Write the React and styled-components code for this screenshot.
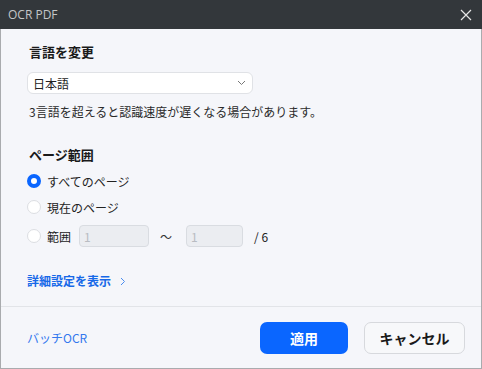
import React, { useState } from "react";
import styled, { createGlobalStyle } from "styled-components";

const GlobalStyle = createGlobalStyle`
  html, body {
    margin: 0;
    padding: 0;
    background: #f5f6fa;
  }
  * {
    box-sizing: border-box;
  }
`;

const FONT = `"Noto Sans CJK JP", "Noto Sans", sans-serif`;

const App = () => {
  const [range, setRange] = useState("all");
  return (
    <>
      <GlobalStyle />
      <Window>
        <TitleBar>
          <Title>OCR PDF</Title>
          <CloseButton aria-label="close">
            <svg width="12" height="12" viewBox="0 0 12 12">
              <path d="M1 1 L11 11 M11 1 L1 11" stroke="#e6e6e6" strokeWidth="1.2" fill="none" />
            </svg>
          </CloseButton>
        </TitleBar>

        <Body>
          <SectionHeader>言語を変更</SectionHeader>
          <Select>
            <span>日本語</span>
            <svg width="9" height="6" viewBox="0 0 9 6">
              <path d="M1 1 L4.5 4.5 L8 1" stroke="#777" strokeWidth="1" fill="none" />
            </svg>
          </Select>
          <Note>3言語を超えると認識速度が遅くなる場合があります。</Note>

          <SectionHeader top={25}>ページ範囲</SectionHeader>
          <RadioList>
            <RadioRow onClick={() => setRange("all")}>
              <Radio checked={range === "all"} />
              <RadioLabel>すべてのページ</RadioLabel>
            </RadioRow>
            <RadioRow onClick={() => setRange("current")}>
              <Radio checked={range === "current"} />
              <RadioLabel>現在のページ</RadioLabel>
            </RadioRow>
            <RadioRow top={7} onClick={() => setRange("range")}>
              <Radio checked={range === "range"} />
              <RadioLabel>範囲</RadioLabel>
              <PageInput width={70} defaultValue="1" disabled />
              <Tilde>～</Tilde>
              <PageInput width={57} defaultValue="1" disabled />
              <Total>/ 6</Total>
            </RadioRow>
          </RadioList>

          <MoreLink>
            詳細設定を表示
            <svg width="6" height="9" viewBox="0 0 6 9">
              <path d="M1 1 L4.5 4.5 L1 8" stroke="#4a8df0" strokeWidth="1" fill="none" />
            </svg>
          </MoreLink>
        </Body>

        <Footer>
          <BatchLink>バッチOCR</BatchLink>
          <ButtonGroup>
            <Button primary>適用</Button>
            <Button>キャンセル</Button>
          </ButtonGroup>
        </Footer>
      </Window>
    </>
  );
};

export default App;

const Window = styled.div`
  width: 482px;
  height: 369px;
  display: flex;
  flex-direction: column;
  background: #f5f6fa;
  border-left: 1px solid #a9abae;
  border-right: 1px solid #a9abae;
  border-bottom: 1px solid #a9abae;
  font-family: ${FONT};
  color: #1f1f1f;
`;

const TitleBar = styled.div`
  height: 29px;
  flex: none;
  display: flex;
  align-items: center;
  justify-content: space-between;
  background: #33373b;
  margin: 0 -1px;
  padding: 0 10px 0 8px;
`;

const Title = styled.span`
  font-family: "Open Sans", "Noto Sans", sans-serif;
  font-size: 12px;
  color: #c4c6c8;
`;

const CloseButton = styled.div`
  display: flex;
  align-items: center;
`;

const Body = styled.div`
  flex: 1;
  display: flex;
  flex-direction: column;
  align-items: flex-start;
  padding: 14px 26px 0 26px;
`;

const SectionHeader = styled.div`
  font-size: 13px;
  font-weight: 700;
  line-height: 18px;
  margin-top: ${(props) => props.top || 0}px;
  padding-left: 2px;
  color: #1a1a1a;
`;

const Select = styled.div`
  width: 226px;
  height: 22px;
  margin-top: 11px;
  display: flex;
  align-items: center;
  justify-content: space-between;
  padding: 0 6px 0 5px;
  background: #ffffff;
  border: 1px solid #e0e2e6;
  border-radius: 6px;
  font-size: 12px;
  color: #222;
`;

const Note = styled.div`
  margin-top: 9px;
  padding-left: 2px;
  font-size: 12px;
  line-height: 18px;
  color: #2a2a2a;
`;

const RadioList = styled.div`
  display: flex;
  flex-direction: column;
  margin-top: 2px;
`;

const RadioRow = styled.div`
  display: flex;
  align-items: center;
  height: 22px;
  margin-top: ${(props) => props.top || 4}px;
  cursor: pointer;
`;

const Radio = styled.span`
  width: 14px;
  height: 14px;
  flex: none;
  border-radius: 50%;
  background: #ffffff;
  border: ${(props) => (props.checked ? "4px solid #0a66ff" : "1px solid #dcdee2")};
`;

const RadioLabel = styled.span`
  margin-left: 6px;
  font-size: 12px;
  color: #222;
`;

const PageInput = styled.input`
  width: ${(props) => props.width}px;
  height: 22px;
  margin-left: 8px;
  padding: 0 4px;
  background: #ebedf1;
  border: 1px solid #d9dce1;
  border-radius: 4px;
  font-family: ${FONT};
  font-size: 12px;
  color: #b9bcc2;
  outline: none;
  & + span {
    margin-left: 11px;
  }
`;

const Tilde = styled.span`
  font-size: 12px;
  color: #333;
  width: 16px;
  margin-right: 2px;
`;

const Total = styled.span`
  font-size: 12px;
  color: #222;
`;

const MoreLink = styled.div`
  margin-top: 25px;
  display: flex;
  align-items: center;
  gap: 9px;
  font-size: 12px;
  font-weight: 700;
  line-height: 18px;
  color: #1769e8;
  cursor: pointer;
`;

const Footer = styled.div`
  height: 62px;
  flex: none;
  display: flex;
  align-items: center;
  justify-content: space-between;
  border-top: 1px solid #e2e4e8;
  padding: 0 16px 0 26px;
`;

const BatchLink = styled.span`
  font-size: 12px;
  color: #3378ee;
  cursor: pointer;
`;

const ButtonGroup = styled.div`
  display: flex;
  gap: 16px;
`;

const Button = styled.button`
  height: 32px;
  width: ${(props) => (props.primary ? "88px" : "101px")};
  border-radius: 7px;
  font-family: ${FONT};
  font-size: 14px;
  font-weight: 700;
  cursor: pointer;
  background: ${(props) => (props.primary ? "#0a66ff" : "#f7f8fa")};
  color: ${(props) => (props.primary ? "#ffffff" : "#1a1a1a")};
  border: ${(props) => (props.primary ? "none" : "1px solid #d7d9dd")};
`;
